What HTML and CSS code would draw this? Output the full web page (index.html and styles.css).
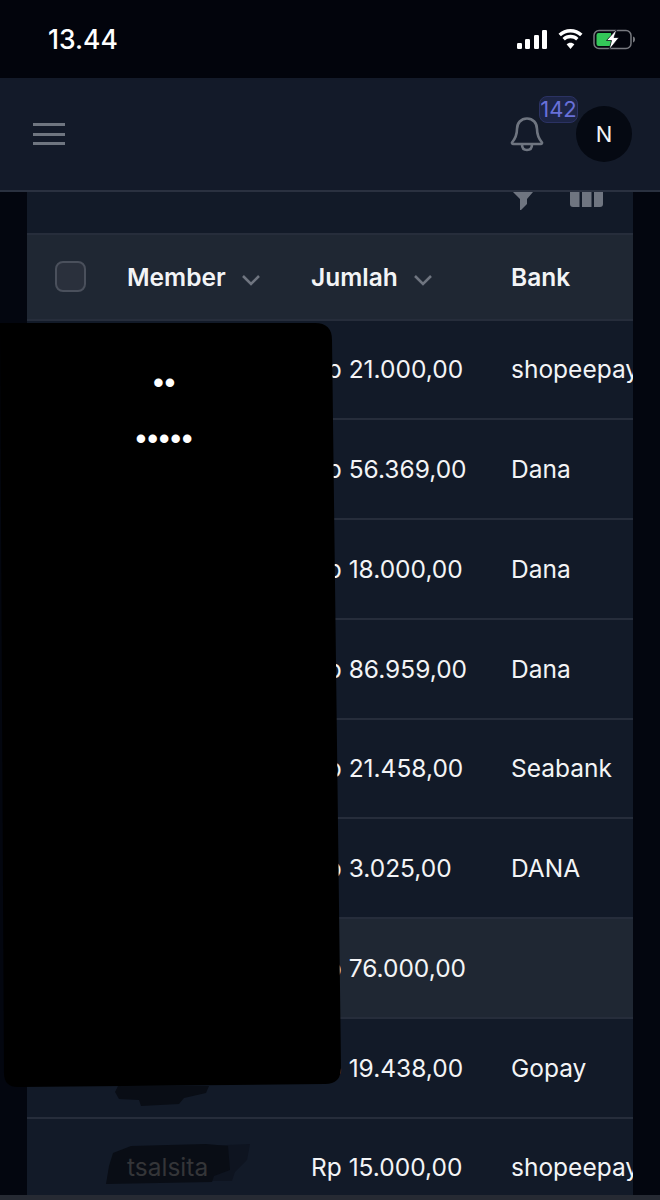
FILE: index.html
```html
<!DOCTYPE html>
<html lang="id">
<head>
  <meta charset="UTF-8">
  <title>Withdraw</title>
  <link rel="stylesheet" href="styles.css">
</head>
<body>
  <div class="statusbar">
    <span class="clock">13.44</span>
    <div class="status-icons">
      <svg width="31" height="19" viewBox="0 0 31 19"><rect x="0" y="13" width="5" height="6" rx="1.2"/><rect x="8" y="9" width="5" height="10" rx="1.2"/><rect x="17" y="5" width="5" height="14" rx="1.2"/><rect x="25" y="0" width="5" height="19" rx="1.2"/></svg>
      <svg width="27" height="20" viewBox="0 0 27 20"><path d="M13.5 3.5c3.700 0 7 1.400 9.600 3.800l2.400-2.600C22.300 1.800 18.100 0 13.500 0S4.700 1.800 1.500 4.700l2.400 2.600c2.600-2.400 5.900-3.800 9.600-3.800z"/><path d="M13.500 9.300c2.100 0 4.100.8 5.600 2.200l2.400-2.600c-2.100-2-4.900-3.100-8-3.100s-5.900 1.100-8 3.100l2.400 2.600c1.500-1.400 3.500-2.200 5.600-2.200z"/><path d="M13.500 20l3.900-4.700c-1-.9-2.400-1.500-3.900-1.500s-2.900.6-3.900 1.500z"/></svg>
      <svg width="43" height="21" viewBox="0 0 43 21">
        <rect x="1" y="1.500" width="37" height="18" rx="5" fill="none" stroke="#77797f" stroke-width="1.500"/>
        <path d="M3.500 6a2 2 0 0 1 2-2H18v13H5.500a2 2 0 0 1-2-2z" fill="#34c759"/>
        <path d="M40 7.500c1.500.4 2 1.600 2 3s-.5 2.600-2 3z" fill="#77797f"/>
        <path d="M24 0 13.500 11.500h5L16 21 26 8.500h-5z" fill="#fff" stroke="#0a0d16" stroke-width=".8"/>
      </svg>
    </div>
  </div>

  <header class="topbar">
    <button class="menu-btn" aria-label="Menu"><span></span><span></span><span></span></button>
    <div class="topbar-right">
      <div class="bell">
        <svg width="36" height="38" viewBox="0 0 36 38" fill="none" stroke="#6f7580" stroke-width="2.600" stroke-linecap="round" stroke-linejoin="round"><path d="M18 3.500c-6 0-10 4.500-10 10.500 0 6-2 10-5 13.500 0 0-.3 1.500 1.500 1.500h27c1.800 0 1.500-1.500 1.500-1.500-3-3.500-5-7.500-5-13.500 0-6-4-10.500-10-10.500z"/><path d="M13 29.500c0 3.500 2 5.500 5 5.500s5-2 5-5.500"/></svg>
        <span class="badge">142</span>
      </div>
      <div class="avatar">N</div>
    </div>
  </header>

  <main class="card">
    <div class="toolbar">
      <svg width="20" height="18" viewBox="0 0 20 18" fill="#6f7580"><path d="M0 0h20l-6 7v5l-6 6h-1V7z"/></svg>
      <svg width="33" height="15" viewBox="0 0 33 15" fill="#6f7580"><path d="M0 0h9.500v15H3a3 3 0 0 1-3-3z"/><rect x="12" y="0" width="9.500" height="15"/><path d="M24 0h9v12a3 3 0 0 1-3 3h-6z"/></svg>
    </div>

    <div class="row head">
      <div class="cell-check"><span class="checkbox"></span></div>
      <div class="cell-member">Member <svg class="chev" width="20" height="12" viewBox="0 0 20 12"><path d="M2 2l8 8 8-8"/></svg></div>
      <div class="cell-jumlah">Jumlah <svg class="chev" width="20" height="12" viewBox="0 0 20 12"><path d="M2 2l8 8 8-8"/></svg></div>
      <div class="cell-bank">Bank</div>
    </div>

    <div class="row"><div class="cell-check"></div><div class="cell-member"></div><div class="cell-jumlah">Rp 21.000,00</div><div class="cell-bank">shopeepay</div></div>
    <div class="row"><div class="cell-check"></div><div class="cell-member"></div><div class="cell-jumlah">Rp 56.369,00</div><div class="cell-bank">Dana</div></div>
    <div class="row"><div class="cell-check"></div><div class="cell-member"></div><div class="cell-jumlah">Rp 18.000,00</div><div class="cell-bank">Dana</div></div>
    <div class="row"><div class="cell-check"></div><div class="cell-member"></div><div class="cell-jumlah">Rp 86.959,00</div><div class="cell-bank">Dana</div></div>
    <div class="row"><div class="cell-check"></div><div class="cell-member"></div><div class="cell-jumlah">Rp 21.458,00</div><div class="cell-bank">Seabank</div></div>
    <div class="row"><div class="cell-check"></div><div class="cell-member"></div><div class="cell-jumlah">Rp 3.025,00</div><div class="cell-bank">DANA</div></div>
    <div class="row hover"><div class="cell-check"></div><div class="cell-member"></div><div class="cell-jumlah">Rp 76.000,00</div><div class="cell-bank"></div></div>
    <div class="row"><div class="cell-check"></div><div class="cell-member"></div><div class="cell-jumlah">Rp 19.438,00</div><div class="cell-bank">Gopay</div></div>
    <div class="row"><div class="cell-check"></div><div class="cell-member"><span class="faint">tsalsita</span></div><div class="cell-jumlah">Rp 15.000,00</div><div class="cell-bank">shopeepay</div></div>
  </main>

  <!-- coretan sensor di atas tabel -->
  <svg class="scribble" width="660" height="1200" viewBox="0 0 660 1200">
    <path d="M118 1086h91l-3 7-22 5-5 6-38 2-2-6-20-1-4-7z" fill="#090d15"/>
    <path d="M205 1146l45-2-3 16-12 12-3 9h-40z" fill="#0e1420"/>
    <path d="M113 1153l18-7 75-2 22 2 2 24-16 6-2 6-106 2 3-18z" fill="#090d15"/>
  </svg>
  <div class="cover">
    <svg width="341" height="764" viewBox="0 0 341 764"><path d="M0 0H315Q332 0 332 17L341 745Q341 761 325 761L18 764Q4 764 4 750z"/></svg>
    <span class="cover-dots top">••</span>
    <span class="cover-dots bottom">•••••</span>
  </div>
  <div class="page-edge"></div>
</body>
</html>
```

FILE: styles.css
```css
* {
  box-sizing: border-box;
}

html, body {
  height: 1200px;
  margin: 0;
  overflow: hidden;
}

body {
  position: relative;
  font-family: Inter, "Liberation Sans", sans-serif;
  background: #03060f;
  color: #f3f4f6;
}

.statusbar {
  height: 78px;
  padding: 0 24px 0 48px;
  display: flex;
  justify-content: space-between;
  align-items: center;
  background: #02040c;
}

.clock {
  font-size: 26.500px;
  font-weight: 500;
  color: #fff;
}

.status-icons {
  display: flex;
  align-items: center;
  gap: 9px;
}

.status-icons svg {
  fill: #fff;
  display: block;
}

.topbar {
  height: 114px;
  padding: 0 28px 0 33px;
  display: flex;
  justify-content: space-between;
  align-items: center;
  background: #131a29;
  border-bottom: 2px solid #2a3140;
}

.menu-btn {
  width: 32px;
  padding: 0;
  border: none;
  background: none;
  display: flex;
  flex-direction: column;
  gap: 6.500px;
}

.menu-btn span {
  height: 3px;
  background: #6f7580;
}

.topbar-right {
  display: flex;
  align-items: center;
  gap: 31px;
}

.bell {
  position: relative;
  width: 36px;
  height: 38px;
}

.bell svg {
  display: block;
}

.badge {
  position: absolute;
  left: 30px;
  top: -19px;
  width: 39px;
  height: 27px;
  border: 1.500px solid #2b3263;
  border-radius: 8px;
  background: #1d2546;
  color: #6870d8;
  font-size: 22px;
  line-height: 24px;
  text-align: center;
}

.avatar {
  width: 56px;
  height: 56px;
  border-radius: 50%;
  background: #050912;
  color: #f3f4f6;
  font-size: 22px;
  line-height: 56px;
  text-align: center;
}

.card {
  width: 606px;
  margin-left: 27px;
  background: #121a28;
  overflow: hidden;
}

.toolbar {
  height: 41px;
  padding-right: 30px;
  display: flex;
  justify-content: flex-end;
  align-items: flex-start;
  gap: 37px;
}

.row {
  height: 99.750px;
  display: grid;
  grid-template-columns: 100px 184px 200px 200px;
  align-items: center;
  border-top: 2px solid #262d3b;
  font-size: 24.500px;
  white-space: nowrap;
}

.head {
  height: 85.500px;
  background: #1f2733;
  font-weight: 600;
}

.hover {
  background: #1f2733;
}

.cell-check {
  padding-left: 28px;
}

.checkbox {
  display: block;
  width: 31px;
  height: 31px;
  border: 2px solid #4a505c;
  border-radius: 8px;
  background: #2a303c;
}

.chev {
  margin-left: 9px;
  fill: none;
  stroke: #6f7580;
  stroke-width: 2.500;
}

.faint {
  position: relative;
  z-index: 2;
  color: #343538;
}

.scribble {
  position: absolute;
  left: 0;
  top: 0;
  z-index: 1;
}

.cover {
  position: absolute;
  left: 0;
  top: 323px;
  width: 341px;
  height: 764px;
  z-index: 3;
}

.cover svg {
  display: block;
}

.cover-dots {
  position: absolute;
  left: 0;
  width: 329px;
  text-align: center;
  color: #fff;
  font-family: "Liberation Sans", sans-serif;
  font-size: 31px;
  letter-spacing: .7px;
  line-height: 40px;
}

.top {
  top: 40px;
}

.bottom {
  top: 96px;
}

.page-edge {
  position: absolute;
  left: 0;
  right: 0;
  bottom: 0;
  height: 5px;
  background: #262a33;
  z-index: 4;
}
```
